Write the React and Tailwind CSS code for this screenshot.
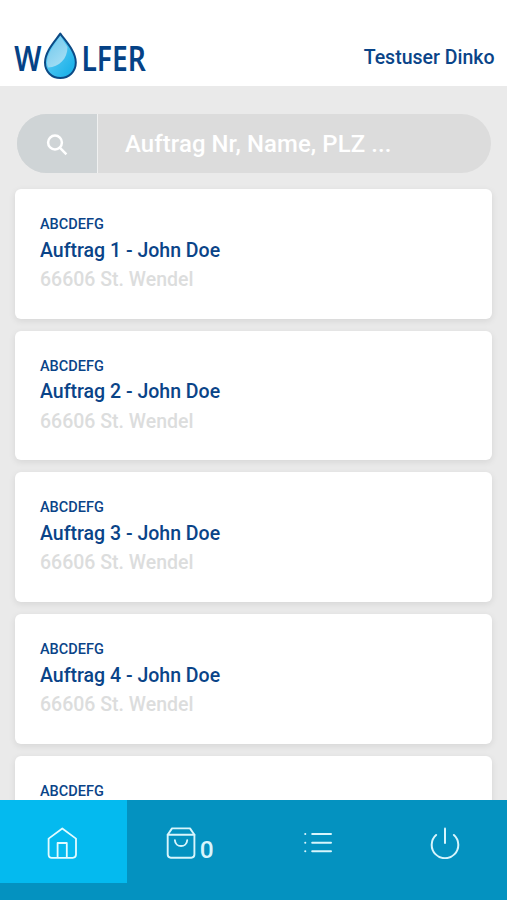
import React from "react";

const orders = [1, 2, 3, 4, 5].map((nr) => ({
  nr,
  code: "ABCDEFG",
  name: "John Doe",
  place: "66606 St. Wendel",
}));

function Logo() {
  return (
    <svg width="140" height="50" viewBox="0 0 140 50" className="block overflow-visible">
      <defs>
        <linearGradient id="drop" x1="0" y1="0" x2="1" y2="1">
          <stop offset="0.2" stopColor="#62cdf5" />
          <stop offset="0.8" stopColor="#22b4ea" />
        </linearGradient>
        <linearGradient id="shine" x1="0" y1="0" x2="0.6" y2="1">
          <stop offset="0" stopColor="#6cc6ec" />
          <stop offset="1" stopColor="#a5def4" />
        </linearGradient>
      </defs>
      <g fill="#054286" fontFamily="'Noto Sans', sans-serif" fontWeight="600" fontSize="33.5">
        <text x="4.3" y="41" textLength="27.2" lengthAdjust="spacingAndGlyphs">W</text>
        <text x="71.4" y="41" textLength="64.4" lengthAdjust="spacingAndGlyphs">LFER</text>
      </g>
      <path
        d="M50.3 3.6C46 10 35 21 35 32.6C35 41.7 41.8 48 50.3 48S65.8 41.7 65.8 32.6C65.8 21 54.6 10 50.3 3.6Z"
        fill="url(#drop)"
        stroke="#0c4a85"
        strokeWidth="2"
        strokeLinejoin="round"
      />
      <path d="M50.3 6C46 13 37 23 37 32.5C37 34.5 37.4 36 38.2 37.5C49 37 57.5 29 57.5 17C55 13 52 9 50.3 6Z" fill="url(#shine)" />
    </svg>
  );
}

function HomeIcon() {
  return (
    <svg width="30" height="32" viewBox="0 0 30 32" fill="none" stroke="#e2fbff" strokeWidth="1.8" strokeLinejoin="round">
      <path d="M1.6 11.6L15.3 1.5L29 11.6V27.6Q29 30.8 25.8 30.8H4.8Q1.6 30.8 1.6 27.6Z" />
      <path d="M10.6 30.8V16H19.8V30.8" />
    </svg>
  );
}

function BagIcon() {
  return (
    <svg width="30" height="32" viewBox="0 0 30 32" fill="none" stroke="#d8f5fc" strokeWidth="1.9" strokeLinecap="round" strokeLinejoin="round">
      <path d="M1.7 7.7L6 1.4H24L28.4 7.7V27.6Q28.4 30.7 25.3 30.7H4.8Q1.7 30.7 1.7 27.6Z" />
      <path d="M1.7 7.7H28.4M8.9 13.2C9.4 21 20.7 21 21.2 13.2" />
    </svg>
  );
}

function ListIcon() {
  return (
    <svg width="30" height="22" viewBox="0 0 30 22" fill="none" stroke="#d8f5fc" strokeWidth="2" strokeLinecap="round">
      <path d="M9.2 2.1H28M9.2 10.7H28M9.2 19.3H28" />
      <path d="M2.2 2.1H2.3M2.2 10.7H2.3M2.2 19.3H2.3" />
    </svg>
  );
}

function PowerIcon() {
  return (
    <svg width="30" height="32" viewBox="0 0 30 32" fill="none" stroke="#d8f5fc" strokeWidth="2" strokeLinecap="round">
      <path d="M6.1 8A13.3 13.3 0 1 0 23.9 8" />
      <path d="M15 1.5V16" />
    </svg>
  );
}

function SearchBar() {
  return (
    <div className="ml-[17px] mr-4 flex h-[59px] shrink-0 overflow-hidden rounded-full bg-[#dcdcdc] text-white">
      <button className="flex w-[81px] items-center justify-center border-r border-[#f0f1f1] bg-[#cfd4d6] pt-[2px]">
        <svg width="22" height="22" viewBox="0 0 22 22" fill="none" stroke="currentColor" strokeWidth="2.5">
          <circle cx="9" cy="8.5" r="6.9" />
          <path d="M13.8 13.7L20.4 20.3" />
        </svg>
      </button>
      <div className="flex flex-1 items-center pl-[27px] pt-[2px] text-[23.9px] font-medium tracking-[0.1px]">
        <span>Auftrag Nr, Name, PLZ ...</span>
      </div>
    </div>
  );
}

function OrderCard({ order }) {
  return (
    <article className="h-[129.5px] shrink-0 rounded-[6px] bg-white pl-[25px] pt-[27px] font-medium shadow-[0_2px_7px_rgba(0,0,0,0.09)]">
      <p className="text-[14.5px] leading-[18px] text-[#0a4488]">{order.code}</p>
      <h2 className="mt-[3.6px] text-[19.5px] leading-[26px] text-[#0a4488]">
        Auftrag {order.nr} - {order.name}
      </h2>
      <p className="mt-[3.4px] text-[19.5px] leading-[26px] text-[#dcdddd]">{order.place}</p>
    </article>
  );
}

export default function App() {
  return (
    <div className="flex h-[900px] w-[507px] flex-col overflow-hidden bg-[#eaeaea] font-['Roboto',sans-serif]">
      <header className="flex h-[86px] shrink-0 items-start justify-between bg-white pl-[10px] pr-[12.5px] pt-[30px]">
        <Logo />
        <span className="mt-[14.5px] text-[19.5px] font-medium leading-[26px] text-[#0a4488]">Testuser Dinko</span>
      </header>

      <main className="flex min-h-0 flex-1 flex-col overflow-hidden pt-[28px]">
        <SearchBar />
        <div className="mt-[16px] flex flex-col gap-[12.2px] pl-[15px] pr-[15px]">
          {orders.map((order) => (
            <OrderCard key={order.nr} order={order} />
          ))}
        </div>
      </main>

      <nav className="z-10 grid h-[100px] shrink-0 grid-cols-4 bg-[#0492c0]">
        <a className="flex h-[83px] items-center justify-center bg-[#04baef] pt-[3px] pr-[2px]">
          <HomeIcon />
        </a>
        <a className="flex h-[83px] items-center pl-[39px] pt-[3px]">
          <BagIcon />
          <span className="ml-[4px] mt-[14px] text-[24.5px] font-medium leading-none text-[#d8f5fc]">0</span>
        </a>
        <a className="flex h-[83px] items-center justify-center pt-[3px] pl-[2px]">
          <ListIcon />
        </a>
        <a className="flex h-[83px] items-center justify-center pt-[3px] pl-[2px]">
          <PowerIcon />
        </a>
      </nav>
    </div>
  );
}
